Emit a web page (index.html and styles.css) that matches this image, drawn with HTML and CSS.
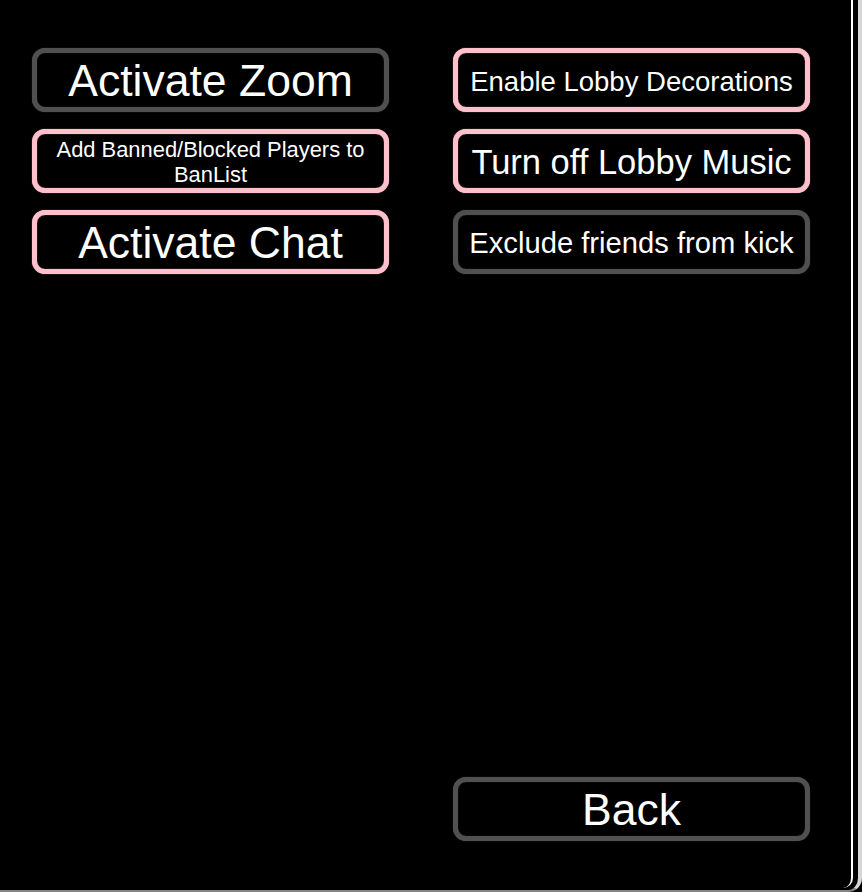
FILE: index.html
```html
<!DOCTYPE html>
<html>
<head>
<meta charset="utf-8">
<link rel="stylesheet" href="styles.css">
</head>
<body>
<div class="frame">
  <div class="panel">
    <div class="grid">
      <div class="btn gray"><span class="t44">Activate Zoom</span></div>
      <div class="btn pink"><span class="t27">Enable Lobby Decorations</span></div>
      <div class="btn pink"><span class="t22">Add Banned/Blocked Players to BanList</span></div>
      <div class="btn pink"><span class="t34">Turn off Lobby Music</span></div>
      <div class="btn pink"><span class="t44">Activate Chat</span></div>
      <div class="btn gray"><span class="t29">Exclude friends from kick</span></div>
    </div>
    <div class="bottom">
      <div class="btn gray"><span class="t44">Back</span></div>
    </div>
  </div>
</div>
</body>
</html>
```

FILE: styles.css
```css
html, body {
  margin: 0;
  padding: 0;
  background: #000;
}
body {
  width: 862px;
  height: 892px;
  overflow: hidden;
  font-family: "Liberation Sans", Arial, sans-serif;
  color: #fff;
}
.frame {
  width: 862px;
  height: 892px;
  box-sizing: border-box;
  border-right: 4px solid #d6d6d6;
  border-bottom: 2px solid #858585;
  border-bottom-right-radius: 14px;
}
.panel {
  width: 853px;
  height: 888px;
  box-sizing: border-box;
  border-right: 2px solid #fff;
  border-bottom-right-radius: 10px;
  padding: 48px 0 47px 32px;
  display: flex;
  flex-direction: column;
}
.grid {
  display: grid;
  grid-template-columns: 357px 357px;
  grid-auto-rows: 64px;
  column-gap: 64px;
  row-gap: 17px;
}
.bottom {
  margin-top: auto;
  display: grid;
  grid-template-columns: 357px 357px;
  column-gap: 64px;
}
.bottom .btn {
  grid-column: 2;
  height: 64px;
}
.btn {
  box-sizing: border-box;
  border: 5px solid;
  border-radius: 13px;
  background: #000;
  display: flex;
  align-items: center;
  justify-content: center;
  text-align: center;
  white-space: nowrap;
  padding-top: 3px;
}
.gray {
  border-color: #505050;
  box-shadow: 0 0 1px #505050, inset 0 0 1px #505050;
}
.pink {
  border-color: #ffc0cb;
  box-shadow: 0 0 1px #ffc0cb, inset 0 0 1px #ffc0cb;
}
.t44 { font-size: 44.5px; line-height: 1; }
.t34 { font-size: 34.5px; line-height: 1; }
.t29 { font-size: 29.2px; line-height: 1; }
.t27 { font-size: 27.5px; line-height: 1; }
.t22 {
  font-size: 21.9px;
  line-height: 24.5px;
  white-space: normal;
  width: 320px;
}
```
